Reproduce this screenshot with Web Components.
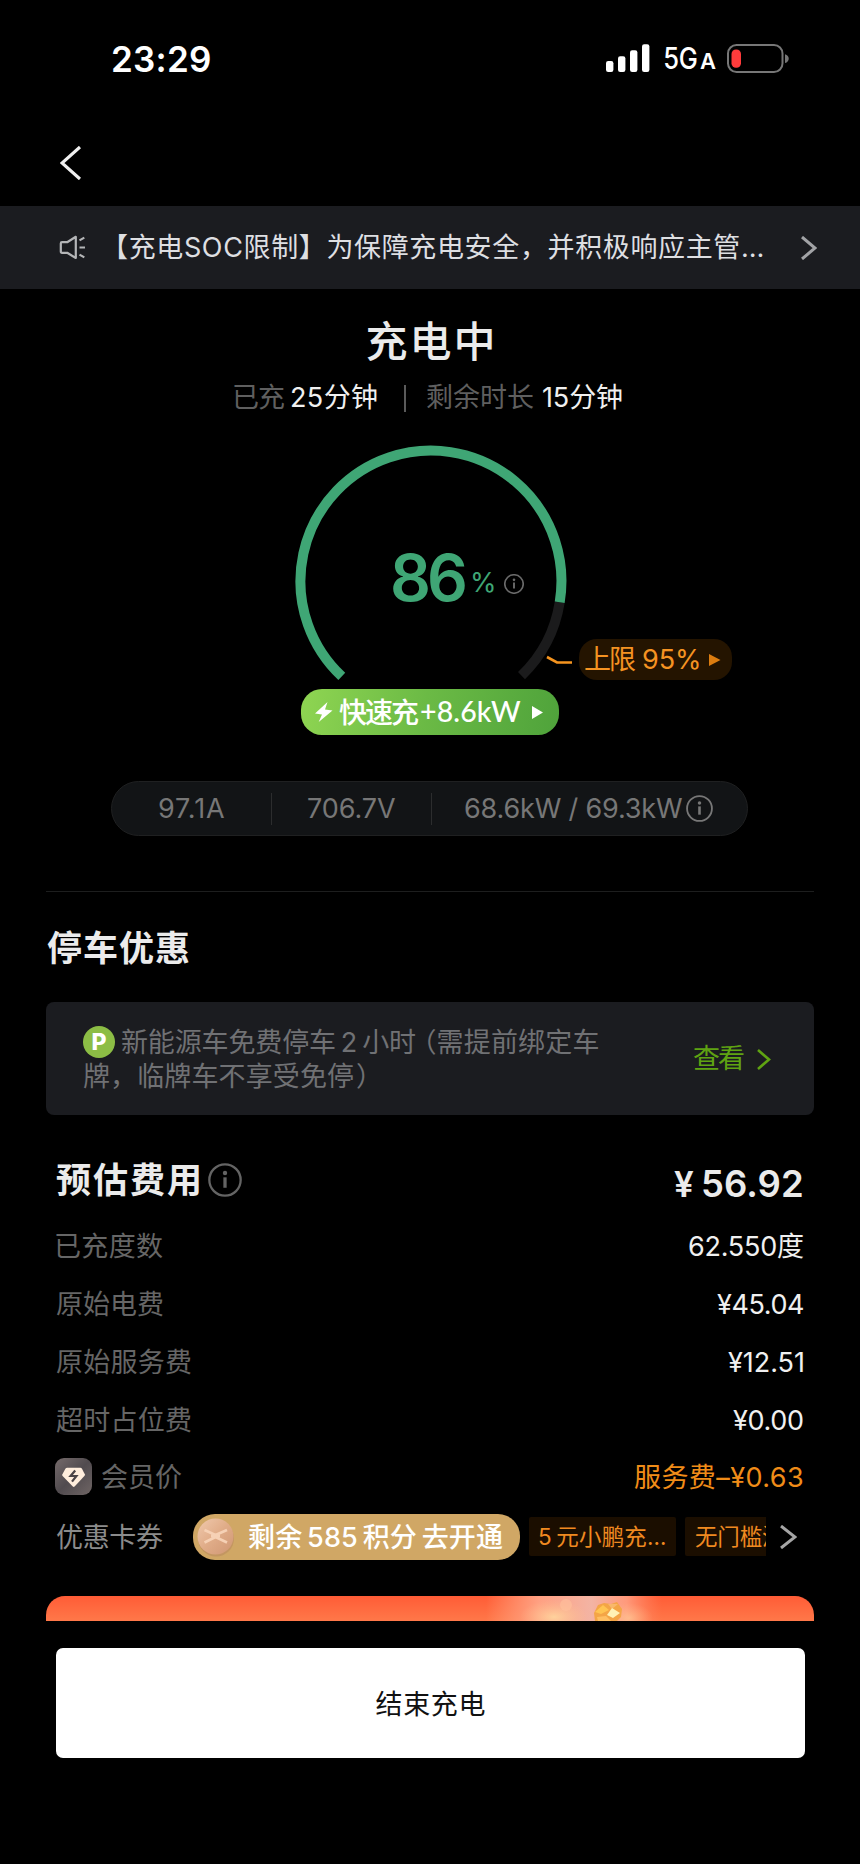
<!DOCTYPE html>
<html lang="zh-CN">
<head>
<meta charset="utf-8">
<title>充电中</title>
<style>
html,body{margin:0;padding:0;background:#000}
body{width:860px;height:1864px;overflow:hidden;color:#ebebeb;font:400 27px/40px Inter,"Noto Sans CJK SC",sans-serif;font-kerning:normal}
</style>
</head>
<body>
<charging-page></charging-page>
<script>
const define=(name,html,extra)=>customElements.define(name,class extends HTMLElement{
  constructor(){super();this.attachShadow({mode:'open'})}
  connectedCallback(){
    this.shadowRoot.innerHTML=typeof html==='function'?html(this):html;
    if(extra)extra(this);
  }
});

/* One line of text tracked so that its ink fills exactly the width given by "w". */
const pen=document.createElement('canvas').getContext('2d');
define('fit-text','<style>:host{display:block;flex:none;white-space:pre}span{display:block}</style><span><slot></slot></span>',el=>{
  const cs=getComputedStyle(el),text=el.textContent,w=+el.getAttribute('w');
  pen.font=`${cs.fontWeight} ${cs.fontSize} ${cs.fontFamily}`;
  pen.wordSpacing=cs.wordSpacing;
  const m=pen.measureText(text),n=[...text].length;
  const ink=m.actualBoundingBoxLeft+m.actualBoundingBoxRight;
  const span=el.shadowRoot.querySelector('span');
  el.style.width=w+'px';
  if(n>1)span.style.letterSpacing=((w-ink)/(n-1))+'px';
  span.style.marginLeft=m.actualBoundingBoxLeft+'px';
});

define('info-icon',el=>{
  const s=+el.getAttribute('size'),k=el.getAttribute('stroke')||1.9;
  return `<style>:host{display:block;flex:none;width:${s}px;height:${s}px}svg{display:block}</style>
  <svg width="${s}" height="${s}" viewBox="0 0 28 28" fill="none" stroke="currentColor"><circle cx="14" cy="14" r="12.9" stroke-width="${k}"/><path d="M14 11.8V20.4" stroke-width="2.7"/><circle cx="14" cy="8.2" r="1.8" fill="currentColor" stroke="none"/></svg>`;
});

define('chevron-icon',el=>{
  const w=+el.getAttribute('w'),h=+el.getAttribute('h'),k=+(el.getAttribute('stroke')||2.6);
  const pts=el.hasAttribute('left')?`${w-1},1 2,${h/2} ${w-1},${h-1}`:`1,1 ${w-2},${h/2} 1,${h-1}`;
  return `<style>:host{display:block;flex:none}svg{display:block}</style>
  <svg width="${w}" height="${h}" fill="none" stroke="currentColor" stroke-width="${k}"><polyline points="${pts}"/></svg>`;
});

define('status-bar',`<style>
:host{display:flex;height:116px;box-sizing:border-box;padding:37px 70px 0 113px;align-items:flex-start;justify-content:space-between;color:#fff}
.time{font-size:35px;font-weight:600;line-height:43px;padding-top:1px}
.right{display:flex;height:43px;align-items:center;width:184px}
.net{display:flex;align-items:baseline;margin:2px 14px 0 15px;gap:3px;font-weight:500;font-size:29.5px}
.net .g{display:block;width:32px}.net .g fit-text{transform:scaleX(.865);transform-origin:0 50%}
.net .a{font-size:22px;font-weight:600}
svg{display:block;flex:none}
</style>
<div class="time"><fit-text w="97">23:29</fit-text></div>
<div class="right">
<svg width="44" height="29" fill="#fff"><rect y="17" width="7.4" height="11" rx="2.2"/><rect x="12" y="12.2" width="7.4" height="15.8" rx="2.2"/><rect x="24" y="6.3" width="7.4" height="21.7" rx="2.2"/><rect x="36" y="0.3" width="7.4" height="27.7" rx="2.2"/></svg>
<div class="net"><span class="g"><fit-text w="37">5G</fit-text></span><fit-text class="a" w="13">A</fit-text></div>
<svg width="63" height="30"><rect x="1" y="1" width="54.5" height="27" rx="8.5" fill="none" stroke="#777" stroke-width="2"/><path d="M58 10.3c5 1.2 5 7.6 0 8.8z" fill="#777"/><rect x="4.5" y="5.5" width="9.5" height="18.3" rx="4.5" fill="#ff3b3b"/></svg>
</div>`);

define('nav-bar',`<style>:host{display:flex;height:90px;box-sizing:border-box;padding:30px 0 0 60px;color:#f0f0f0}</style>
<chevron-icon left w="21" h="34" stroke="3.2"></chevron-icon>`);

define('notice-bar',`<style>
:host{display:flex;align-items:center;height:83px;box-sizing:border-box;background:#1b1c20;padding-left:59px;color:#dedfe2}
svg{display:block;flex:none}fit-text{margin:1px 38px 0 32px}chevron-icon{color:#a2a3a6}
</style>
<svg width="27" height="25" fill="none" stroke="#b4b5b7" stroke-width="2.2" stroke-linejoin="round"><path d="M3 7.2H8.2L16.8 1.8V23L8.2 17.8H3Q1.8 17.8 1.8 16.5V8.5Q1.8 7.2 3 7.2Z"/><path d="M20.5 5.4L25.3 2.6M20.5 12.5H26M20.5 19.6L25.3 22.4"/></svg>
<fit-text w="645">【充电SOC限制】为保障充电安全，并积极响应主管…</fit-text>
<chevron-icon w="16" h="24" stroke="3"></chevron-icon>`);

define('charge-status',`<style>
:host{display:block;height:149px;box-sizing:border-box;padding-top:27px}
.title{display:flex;justify-content:center;font-size:42px;font-weight:500;line-height:52px}
.sub{display:flex;align-items:center;height:40px;margin-top:10px;padding-left:234px;color:#5f5f5f}
b{font-weight:400;color:#f0f0f0}i{width:2px;height:27px;background:#5a5a5a;margin:0 21px 0 27px}
</style>
<div class="title"><fit-text w="125">充电中</fit-text></div>
<div class="sub"><fit-text w="50">已充</fit-text><b style="margin-left:8px"><fit-text w="85">25分钟</fit-text></b><i></i><fit-text w="107">剩余时长</fit-text><b style="margin-left:9px"><fit-text w="79">15分钟</fit-text></b></div>`);

define('charge-gauge',`<style>
:host{display:grid;height:251px}
.ring,.value,.limit{grid-area:1/1}
.ring{display:block}
.value{display:flex;align-items:flex-start;padding:103px 0 0 393px;color:#3fa675}
.value .n{font-size:64px;font-weight:600;line-height:74px}
.value .p{margin:22px 0 0 8px;font-size:27px}
.value info-icon{margin:33px 0 0 10px;color:#6a6a6a}
.limit{display:flex;align-items:center;align-self:start;justify-self:start;box-sizing:border-box;width:153px;height:41px;margin:201px 0 0 579px;padding-left:6px;border-radius:18px;background:#241400;color:#f59322}
</style>
<svg class="ring" width="860" height="251" viewBox="0 438 860 251" fill="none" stroke-width="10">
<path d="M559.7 602.3A130.5 130.5 0 0 1 521.5 675.7" stroke="#1b1b1c"/>
<path d="M341.8 676.4A130.5 130.5 0 1 1 559.7 602.3" stroke="#3fa675"/>
<polyline points="547,657 557,662.5 572,662.5" stroke="#f5941f" stroke-width="2.6"/></svg>
<div class="value"><fit-text class="n" w="72">86</fit-text><fit-text class="p" w="21">%</fit-text><info-icon size="20" stroke="2.3"></info-icon></div>
<div class="limit"><fit-text w="51">上限</fit-text><fit-text w="56" style="margin-left:7px">95%</fit-text><svg width="12" height="12" style="margin-left:10px"><path d="M0 0L11.5 6L0 12z" fill="#dc7d10"/></svg></div>`);

define('boost-pill',`<style>
:host{display:flex;align-items:center;width:258px;height:46px;box-sizing:border-box;margin-left:301px;padding-left:14px;border-radius:21px;background:linear-gradient(100deg,#8fd552,#6bba45 48%,#4fa33b);color:#fff}
.cn{font-weight:500;font-size:28px;margin-top:2px}.en{font-family:Lato,Inter,sans-serif;font-weight:500;font-size:28.5px;margin:-2px 11px 0 2px}
svg{display:block;flex:none}
</style>
<svg width="18" height="20" fill="#fff" style="margin-right:6px"><path d="M12.5 0L0 11.5L7 12.4L3.7 20L17.5 8.5L10 7.4z"/></svg>
<fit-text class="cn" w="80">快速充</fit-text><fit-text class="en" w="100">+8.6kW</fit-text><svg width="11" height="13"><path d="M0 0L11 6.5L0 13z" fill="#fff"/></svg>`);

define('stat-strip',`<style>
:host{display:flex;align-items:center;width:637px;height:55px;box-sizing:border-box;margin:46px 0 0 111px;border:1px solid #1f2021;border-radius:28px;background:#121416;color:#777;padding-left:47px}
i{width:1px;height:32px;background:#2c2d2e}
</style>
<fit-text w="65">97.1A</fit-text><i style="margin:0 36px 0 47px"></i><fit-text w="87">706.7V</fit-text><i style="margin:0 33px 0 36px"></i><fit-text w="217">68.6kW / 69.3kW</fit-text><info-icon size="27" style="margin-left:4px"></info-icon>`);

define('section-rule',`<style>:host{display:block;margin:55px 46px 0;height:1px;background:#1d1e1e}</style>`);

define('parking-card',`<style>
:host{display:block;margin:0 46px}
.head{display:flex;align-items:center;height:40px;margin:36px 0 34px 1px;font-size:35px;font-weight:700}
.card{display:flex;justify-content:space-between;height:113px;box-sizing:border-box;padding:21px 43px 0 37px;border-radius:8px;background:#1b1c20;color:#707174}
.line{display:flex;align-items:center;height:40px}.line+.line{margin-top:-6px}
.line .half{font-feature-settings:"halt";line-height:40px}
.p{display:flex;align-items:center;justify-content:center;width:32px;height:32px;border-radius:50%;background:#8cbd45;color:#fff;font-weight:800;font-size:23px;margin:-2px 7px 0 0}
.more{display:flex;align-items:center;height:40px;margin-top:16px;color:#5fa312}
</style>
<div class="head"><fit-text w="142">停车优惠</fit-text></div>
<div class="card"><div>
<div class="line"><span class="p"><fit-text w="13">P</fit-text></span><fit-text w="293" style="word-spacing:-2.5px">新能源车免费停车 2 小时</fit-text><span class="half" style="margin-left:8px">（</span><fit-text w="161" style="margin-left:1px">需提前绑定车</fit-text></div>
<div class="line"><fit-text w="270">牌，临牌车不享受免停</fit-text><span class="half" style="margin-left:3px">）</span></div>
</div><div class="more"><fit-text w="51">查看</fit-text><chevron-icon w="14" h="21" style="margin-left:13px"></chevron-icon></div></div>`);

define('fee-header',`<style>
:host{display:flex;justify-content:space-between;height:102px;box-sizing:border-box;padding:45px 58px 0 56px}
.l{display:flex;align-items:center;height:40px;font-weight:700;font-size:35px}
.r{display:flex;align-items:center;height:40px;margin-top:4px;font-weight:600;font-size:36.5px}
info-icon{margin-left:9px;color:#646464}
</style>
<div class="l"><fit-text w="143">预估费用</fit-text><info-icon size="34" stroke="1.9"></info-icon></div>
<div class="r"><fit-text w="21" style="font-size:35px">¥</fit-text><fit-text w="99" style="margin-left:8px">56.92</fit-text></div>`);

define('fee-row',`<style>
:host{display:flex;align-items:center;justify-content:space-between;height:58px;box-sizing:border-box;padding:2px 57px 0 56px;color:#666}
:host([accent]){padding-top:0}
div{display:flex;align-items:center}.v{color:#f0f0f0}:host([accent]) .v{color:#f08c18}
</style><div><slot></slot></div><div class="v"><slot name="value"></slot></div>`);

define('member-icon',`<style>:host{display:block;margin:-3px 10px 0 -1px}svg{display:block}</style>
<svg width="37" height="37"><defs><linearGradient id="g" x1="0" y1="0" x2="1" y2="1"><stop stop-color="#766b6b"/><stop offset=".5" stop-color="#514b4f"/><stop offset="1" stop-color="#6f6564"/></linearGradient></defs>
<rect width="37" height="37" rx="9" fill="url(#g)"/><path d="M12.2 9.8H25.4Q26.4 9.8 27 10.7L29.8 16.2Q30.1 17.2 29.4 18L19.6 28.6Q18.7 29.5 17.8 28.6L7.6 18Q6.9 17.2 7.4 16.2L10.4 10.7Q11 9.8 12.2 9.8Z" fill="#ffeddc"/><path d="M20.2 12.5L15.6 18H21.4L17 23.6" fill="none" stroke="#4b4447" stroke-width="2.2"/></svg>`);

define('coupon-row',`<style>
:host{display:flex;align-items:center;height:61px;padding-left:56px;color:#8b8b8b}
.gold{display:flex;align-items:center;box-sizing:border-box;width:327px;height:46px;margin:-1px 9px 0 30px;padding-left:4px;border-radius:22px;background:#d0a765;color:#fff;font-weight:500}
.tags{display:flex;gap:9px;width:237px;margin-top:-2px;overflow:hidden;color:#f08a20;font-size:22.5px}
.tag{display:flex;flex:none;align-items:center;height:39px;width:147px;box-sizing:border-box;padding-left:10px;background:#1b0e00;border-radius:2px}
chevron-icon{margin:-1px 0 0 14px;color:#a5a5a5}svg{display:block}
</style>
<fit-text w="107">优惠卡券</fit-text>
<div class="gold"><svg width="38" height="40"><defs><linearGradient id="c" x1="0" y1="0" x2="1" y2="1"><stop stop-color="#f0c9ad"/><stop offset=".5" stop-color="#e0ac88"/><stop offset="1" stop-color="#cf9673"/></linearGradient></defs><circle cx="19" cy="21.5" r="18" fill="#bd8f5f" opacity=".7"/><circle cx="18.5" cy="19.5" r="18" fill="url(#c)"/><path d="M7.5 13L18.5 18L30 13M7.5 25.5L18.5 20L30 25.5M14 19H23" fill="none" stroke="#f6d1b5" stroke-width="2.6"/></svg>
<fit-text w="255" style="margin:2px 0 0 13px;word-spacing:-2.5px">剩余 585 积分 去开通</fit-text></div>
<div class="tags"><span class="tag"><fit-text w="126" style="margin-top:1px;word-spacing:-2px">5 元小鹏充…</fit-text></span><span class="tag"><fit-text w="89" style="margin-top:1px">无门槛满</fit-text></span></div>
<chevron-icon w="17" h="24" stroke="3"></chevron-icon>`);

define('promo-banner',`<style>:host{display:block;width:768px;height:25px;margin:28px 0 0 46px;border-radius:19px 19px 0 0;overflow:hidden;background:linear-gradient(#ff5c36,#ff7849)}svg{display:block}</style>
<svg width="768" height="25"><defs>
<linearGradient id="h"><stop stop-color="#ffb08c" stop-opacity="0"/><stop offset=".3" stop-color="#ffa78a" stop-opacity=".9"/><stop offset=".6" stop-color="#f3b4a4"/><stop offset=".8" stop-color="#ffa78b" stop-opacity=".8"/><stop offset="1" stop-color="#ff8a66" stop-opacity="0"/></linearGradient>
<radialGradient id="y"><stop stop-color="#ffdca0"/><stop offset="1" stop-color="#ffc18c" stop-opacity="0"/></radialGradient></defs>
<rect x="440" width="176" height="25" fill="url(#h)"/>
<ellipse cx="508" cy="21" rx="34" ry="17" fill="url(#y)" opacity=".8"/><ellipse cx="583" cy="22" rx="24" ry="15" fill="url(#y)" opacity=".5"/>
<circle cx="520" cy="9" r="6" fill="#ffc29d" opacity=".6"/>
<path d="M549 25L548 17L552 9L558 7L565 8L571 6L576 13L575 21L571 25Z" fill="#f4a546"/><path d="M549 16L557 9L563 14L555 18Z" fill="#ffc452"/><path d="M562 8L572 8L566 13Z" fill="#f9b86a"/><path d="M561 19L566 12L574 17L567 22Z" fill="#fff2b5"/><path d="M551 21L560 20L565 25H552Z" fill="#ffbf63"/></svg>`);

define('end-button',`<style>:host{display:block}button{display:flex;align-items:center;justify-content:center;box-sizing:border-box;width:749px;height:110px;margin:27px 0 0 55.5px;padding:3px 0 0;border:0;border-radius:7px;background:#fff;color:#111;font:inherit}</style>
<button><fit-text w="109">结束充电</fit-text></button>`);

define('charging-page',`<style>:host{display:flex;flex-direction:column;width:860px;height:1864px}:host>*{flex:none}</style>
<status-bar></status-bar><nav-bar></nav-bar><notice-bar></notice-bar>
<charge-status></charge-status><charge-gauge></charge-gauge><boost-pill></boost-pill>
<stat-strip></stat-strip><section-rule></section-rule><parking-card></parking-card>
<fee-header></fee-header>
<fee-row><fit-text w="107">已充度数</fit-text><fit-text slot="value" w="114">62.550度</fit-text></fee-row>
<fee-row><fit-text w="107">原始电费</fit-text><fit-text slot="value" w="86">¥45.04</fit-text></fee-row>
<fee-row><fit-text w="135">原始服务费</fit-text><fit-text slot="value" w="75">¥12.51</fit-text></fee-row>
<fee-row><fit-text w="135">超时占位费</fit-text><fit-text slot="value" w="70">¥0.00</fit-text></fee-row>
<fee-row accent><member-icon></member-icon><fit-text w="80">会员价</fit-text><fit-text slot="value" w="169">服务费–¥0.63</fit-text></fee-row>
<coupon-row></coupon-row><promo-banner></promo-banner><end-button></end-button>`);
</script>
</body>
</html>
